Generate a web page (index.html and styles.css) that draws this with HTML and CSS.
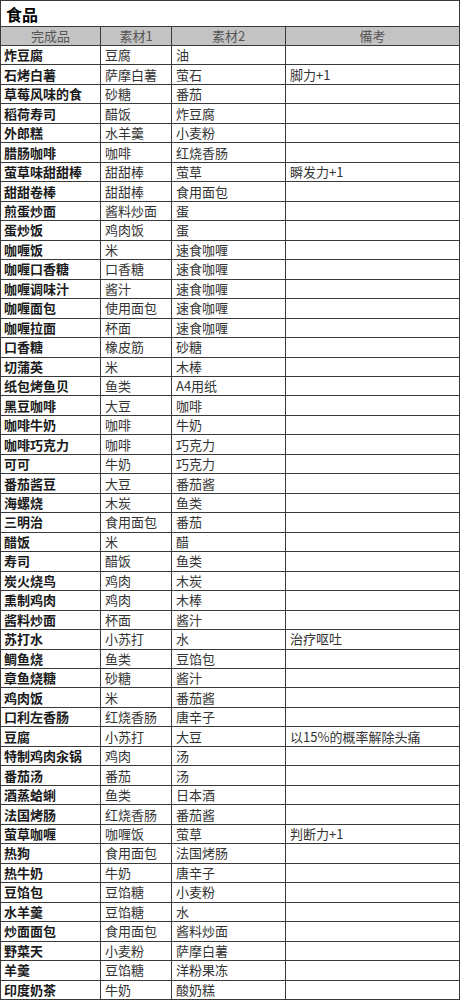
FILE: index.html
```html
<!DOCTYPE html>
<html lang="zh">
<head>
<meta charset="utf-8">
<title>食品</title>
<link rel="stylesheet" href="styles.css">
</head>
<body>
<table class="food">
<colgroup><col class="c1"><col class="c2"><col class="c3"><col class="c4"></colgroup>
<tr class="title"><td colspan="4">食品</td></tr>
<tr class="head"><th>完成品</th><th>素材1</th><th>素材2</th><th>備考</th></tr>
<tr><td>炸豆腐</td><td>豆腐</td><td>油</td><td></td></tr>
<tr><td>石烤白薯</td><td>萨摩白薯</td><td>萤石</td><td>脚力+1</td></tr>
<tr><td>草莓风味的食</td><td>砂糖</td><td>番茄</td><td></td></tr>
<tr><td>稻荷寿司</td><td>醋饭</td><td>炸豆腐</td><td></td></tr>
<tr><td>外郎糕</td><td>水羊羹</td><td>小麦粉</td><td></td></tr>
<tr><td>腊肠咖啡</td><td>咖啡</td><td>红烧香肠</td><td></td></tr>
<tr><td>萤草味甜甜棒</td><td>甜甜棒</td><td>萤草</td><td>瞬发力+1</td></tr>
<tr><td>甜甜卷棒</td><td>甜甜棒</td><td>食用面包</td><td></td></tr>
<tr><td>煎蛋炒面</td><td>酱料炒面</td><td>蛋</td><td></td></tr>
<tr><td>蛋炒饭</td><td>鸡肉饭</td><td>蛋</td><td></td></tr>
<tr><td>咖喱饭</td><td>米</td><td>速食咖喱</td><td></td></tr>
<tr><td>咖喱口香糖</td><td>口香糖</td><td>速食咖喱</td><td></td></tr>
<tr><td>咖喱调味汁</td><td>酱汁</td><td>速食咖喱</td><td></td></tr>
<tr><td>咖喱面包</td><td>使用面包</td><td>速食咖喱</td><td></td></tr>
<tr><td>咖喱拉面</td><td>杯面</td><td>速食咖喱</td><td></td></tr>
<tr><td>口香糖</td><td>橡皮筋</td><td>砂糖</td><td></td></tr>
<tr><td>切蒲英</td><td>米</td><td>木棒</td><td></td></tr>
<tr><td>纸包烤鱼贝</td><td>鱼类</td><td>A4用纸</td><td></td></tr>
<tr><td>黑豆咖啡</td><td>大豆</td><td>咖啡</td><td></td></tr>
<tr><td>咖啡牛奶</td><td>咖啡</td><td>牛奶</td><td></td></tr>
<tr><td>咖啡巧克力</td><td>咖啡</td><td>巧克力</td><td></td></tr>
<tr><td>可可</td><td>牛奶</td><td>巧克力</td><td></td></tr>
<tr><td>番茄酱豆</td><td>大豆</td><td>番茄酱</td><td></td></tr>
<tr><td>海螺烧</td><td>木炭</td><td>鱼类</td><td></td></tr>
<tr><td>三明治</td><td>食用面包</td><td>番茄</td><td></td></tr>
<tr><td>醋饭</td><td>米</td><td>醋</td><td></td></tr>
<tr><td>寿司</td><td>醋饭</td><td>鱼类</td><td></td></tr>
<tr><td>炭火烧鸟</td><td>鸡肉</td><td>木炭</td><td></td></tr>
<tr><td>熏制鸡肉</td><td>鸡肉</td><td>木棒</td><td></td></tr>
<tr><td>酱料炒面</td><td>杯面</td><td>酱汁</td><td></td></tr>
<tr><td>苏打水</td><td>小苏打</td><td>水</td><td>治疗呕吐</td></tr>
<tr><td>鲷鱼烧</td><td>鱼类</td><td>豆馅包</td><td></td></tr>
<tr><td>章鱼烧糖</td><td>砂糖</td><td>酱汁</td><td></td></tr>
<tr><td>鸡肉饭</td><td>米</td><td>番茄酱</td><td></td></tr>
<tr><td>口利左香肠</td><td>红烧香肠</td><td>唐辛子</td><td></td></tr>
<tr><td>豆腐</td><td>小苏打</td><td>大豆</td><td>以15%的概率解除头痛</td></tr>
<tr><td>特制鸡肉汆锅</td><td>鸡肉</td><td>汤</td><td></td></tr>
<tr><td>番茄汤</td><td>番茄</td><td>汤</td><td></td></tr>
<tr><td>酒蒸蛤蜊</td><td>鱼类</td><td>日本酒</td><td></td></tr>
<tr><td>法国烤肠</td><td>红烧香肠</td><td>番茄酱</td><td></td></tr>
<tr><td>萤草咖喱</td><td>咖喱饭</td><td>萤草</td><td>判断力+1</td></tr>
<tr><td>热狗</td><td>食用面包</td><td>法国烤肠</td><td></td></tr>
<tr><td>热牛奶</td><td>牛奶</td><td>唐辛子</td><td></td></tr>
<tr><td>豆馅包</td><td>豆馅糖</td><td>小麦粉</td><td></td></tr>
<tr><td>水羊羹</td><td>豆馅糖</td><td>水</td><td></td></tr>
<tr><td>炒面面包</td><td>食用面包</td><td>酱料炒面</td><td></td></tr>
<tr><td>野菜天</td><td>小麦粉</td><td>萨摩白薯</td><td></td></tr>
<tr><td>羊羹</td><td>豆馅糖</td><td>洋粉果冻</td><td></td></tr>
<tr><td>印度奶茶</td><td>牛奶</td><td>酸奶糕</td><td></td></tr>
</table>
</body>
</html>
```

FILE: styles.css
```css
html, body {
  margin: 0;
  padding: 0;
  background: #ffffff;
}

.food {
  border-collapse: collapse;
  table-layout: fixed;
  width: 459px;
  font-family: "Noto Sans CJK SC", "Noto Sans", sans-serif;
  font-size: 13px;
  color: #333333;
}

.c1 { width: 100px; }
.c2 { width: 71px; }
.c3 { width: 114px; }
.c4 { width: 174px; }

.food td,
.food th {
  border: 1px solid #3a3a3a;
  padding: 0 0 0 4px;
  line-height: 16px;
  height: 18.48px;
  text-align: left;
  white-space: nowrap;
  overflow: hidden;
  vertical-align: middle;
}

.food td:first-child {
  font-weight: bold;
  color: #1a1a1a;
  padding-left: 3px;
}

.food .title td {
  height: 25px;
  font-size: 16px;
  font-weight: bold;
  color: #000000;
  padding-left: 5px;
}

.food .head th {
  height: 18px;
  background: #c3c3c3;
  font-weight: normal;
  color: #555555;
  text-align: center;
  padding: 0;
}
```
